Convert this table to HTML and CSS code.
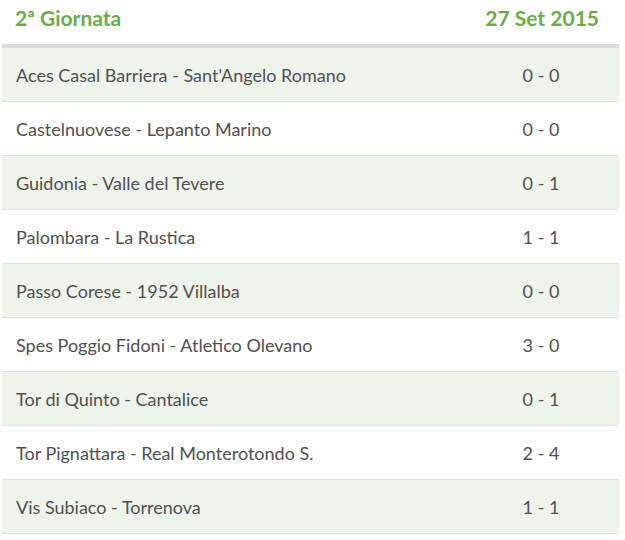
FILE: index.html
```html
<!DOCTYPE html>
<html lang="it">
<head>
<meta charset="utf-8">
<title>2ª Giornata</title>
<link rel="stylesheet" href="styles.css">
</head>
<body>
<table class="results">
  <thead>
    <tr>
      <th class="round">2ª Giornata</th>
      <th class="date">27 Set 2015</th>
    </tr>
  </thead>
  <tbody>
    <tr><td class="match">Aces Casal Barriera - Sant'Angelo Romano</td><td class="score">0 - 0</td></tr>
    <tr><td class="match">Castelnuovese - Lepanto Marino</td><td class="score">0 - 0</td></tr>
    <tr><td class="match">Guidonia - Valle del Tevere</td><td class="score">0 - 1</td></tr>
    <tr><td class="match">Palombara - La Rustica</td><td class="score">1 - 1</td></tr>
    <tr><td class="match">Passo Corese - 1952 Villalba</td><td class="score">0 - 0</td></tr>
    <tr><td class="match">Spes Poggio Fidoni - Atletico Olevano</td><td class="score">3 - 0</td></tr>
    <tr><td class="match">Tor di Quinto - Cantalice</td><td class="score">0 - 1</td></tr>
    <tr><td class="match">Tor Pignattara - Real Monterotondo S.</td><td class="score">2 - 4</td></tr>
    <tr><td class="match">Vis Subiaco - Torrenova</td><td class="score">1 - 1</td></tr>
  </tbody>
</table>
</body>
</html>
```
FILE: styles.css
```css
html, body {
  margin: 0;
  padding: 0;
  background: #fff;
}
body {
  padding: 0 6px 0 2px;
  font-family: Lato, "Open Sans", sans-serif;
}
.results {
  width: 617px;
  border-collapse: collapse;
}
.results th {
  height: 46px;
  padding: 0 12px 9px 13px;
  font-size: 21px;
  font-weight: 700;
  color: #6aac4d;
  border-bottom: 4px solid #dcdcdc;
  vertical-align: middle;
  line-height: 24px;
  box-sizing: border-box;
}
.results .round { text-align: left; }
.results .date { text-align: right; padding-right: 20px; }
.results td {
  height: 53px;
  border-bottom: 1px solid #dedede;
  font-size: 18px;
  color: #505050;
  vertical-align: middle;
  padding: 0;
}
.results tbody tr:nth-child(odd) td {
  background: #eef4ec;
}
.results .match {
  padding-left: 14px;
}
.results .score {
  width: 156px;
  text-align: center;
}
```
